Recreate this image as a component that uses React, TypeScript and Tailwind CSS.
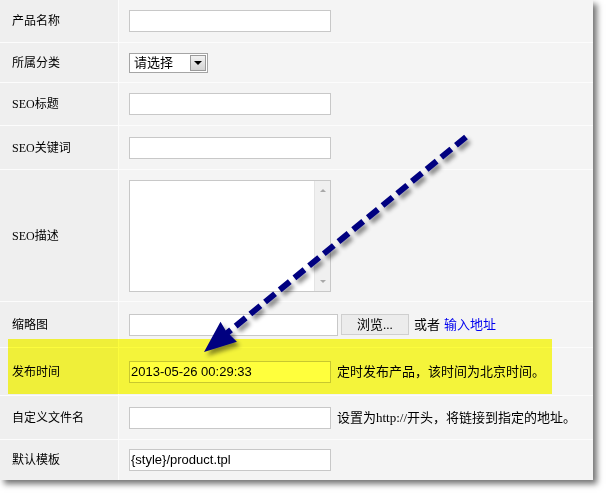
import type { ReactNode } from 'react'
import { clsx } from 'clsx'

const cjk = "font-['SimSun','Liberation_Serif','Noto_Sans_CJK_SC',serif]"
const arial = "font-['Liberation_Sans','Noto_Sans_CJK_SC',sans-serif]"

function Row({ h, label, children, last }: { h: string; label: string; children?: ReactNode; last?: boolean }) {
  return (
    <div className={clsx('flex', h, !last && 'border-b border-[#fcfcfc]')}>
      <div className={clsx('w-[119px] shrink-0 bg-[#efefef] border-r border-[#fcfcfc] flex items-center pl-3 text-[12px] text-black', cjk)}>
        {label}
      </div>
      <div className="flex-1 bg-[#f4f4f4] flex items-center pl-[10px]">{children}</div>
    </div>
  )
}

function TextBox({ w = 'w-[202px]', value }: { w?: string; value?: string }) {
  return (
    <div className={clsx(w, 'h-[22px] border border-[#c8c8c8] bg-white flex items-center pl-[1px] text-[13px] text-black', arial)}>
      {value}
    </div>
  )
}

function Note({ children }: { children: ReactNode }) {
  return <span className={clsx('ml-[6px] text-[13px] text-black', cjk)}>{children}</span>
}

export default function App() {
  return (
    <div className="relative w-[608px] h-[496px] bg-white overflow-hidden">
      <div className="w-[593px] shadow-[4px_4px_6px_rgba(0,0,0,0.55)]">
        <Row h="h-[43px]" label="产品名称">
          <TextBox />
        </Row>
        <Row h="h-[40px]" label="所属分类">
          <div className="w-[79px] h-[20px] border border-[#a5a5a5] bg-white flex items-center">
            <span className={clsx('flex-1 pl-[4px] text-[13px] text-black', cjk)}>请选择</span>
            <div className="w-[16px] h-[16px] mr-[1px] border border-[#9a9a9a] bg-gradient-to-b from-[#f2f2f2] to-[#d4d4d4] flex items-center justify-center">
              <div className="w-0 h-0 border-l-[4px] border-r-[4px] border-t-[4px] border-l-transparent border-r-transparent border-t-black" />
            </div>
          </div>
        </Row>
        <Row h="h-[43px]" label="SEO标题">
          <TextBox />
        </Row>
        <Row h="h-[44px]" label="SEO关键词">
          <TextBox />
        </Row>
        <Row h="h-[132px]" label="SEO描述">
          <div className="w-[202px] h-[112px] border border-[#c8c8c8] bg-white flex">
            <div className="flex-1" />
            <div className="w-[16px] bg-[#f0f0f0] border-l border-[#e4e4e4] flex flex-col items-center justify-between py-[8px]">
              <div className="w-0 h-0 border-l-[3px] border-r-[3px] border-b-[3px] border-l-transparent border-r-transparent border-b-[#a8a8a8]" />
              <div className="w-0 h-0 border-l-[3px] border-r-[3px] border-t-[3px] border-l-transparent border-r-transparent border-t-[#a8a8a8]" />
            </div>
          </div>
        </Row>
        <Row h="h-[46px]" label="缩略图">
          <TextBox w="w-[209px]" />
          <div className={clsx('ml-[3px] w-[68px] h-[21px] border border-[#cfcfcf] bg-[#ececec] flex items-center justify-center text-[13px] text-black', cjk)}>
            浏览...
          </div>
          <span className={clsx('ml-[5px] text-[13px] text-black', cjk)}>或者</span>
          <span className={clsx('ml-[4px] text-[13px] text-[#0000ee]', cjk)}>输入地址</span>
        </Row>
        <Row h="h-[48px]" label="发布时间">
          <TextBox value="2013-05-26 00:29:33" />
          <Note>定时发布产品，该时间为北京时间。</Note>
        </Row>
        <Row h="h-[44px]" label="自定义文件名">
          <TextBox />
          <Note>设置为http://开头，将链接到指定的地址。</Note>
        </Row>
        <Row h="h-[40px]" label="默认模板" last>
          <TextBox value="{style}/product.tpl" />
        </Row>
      </div>

      {/* yellow highlight */}
      <div className="absolute left-[8px] top-[339px] w-[544px] h-[55px] bg-[#ffff3c] mix-blend-multiply pointer-events-none" />

      {/* arrow */}
      <svg className="absolute left-0 top-0 pointer-events-none" width="608" height="496" viewBox="0 0 608 496">
        <defs>
          <filter id="sh" x="-20%" y="-20%" width="140%" height="140%">
            <feDropShadow dx="3" dy="4" stdDeviation="2" floodColor="#000" floodOpacity="0.45" />
          </filter>
        </defs>
        <g filter="url(#sh)">
          <line x1="466" y1="137" x2="226" y2="334" stroke="#000080" strokeWidth="6" strokeDasharray="13 6" />
          <polygon points="204,352 220.5,321.7 226,331 236.9,341.7" fill="#000080" />
        </g>
      </svg>
    </div>
  )
}
